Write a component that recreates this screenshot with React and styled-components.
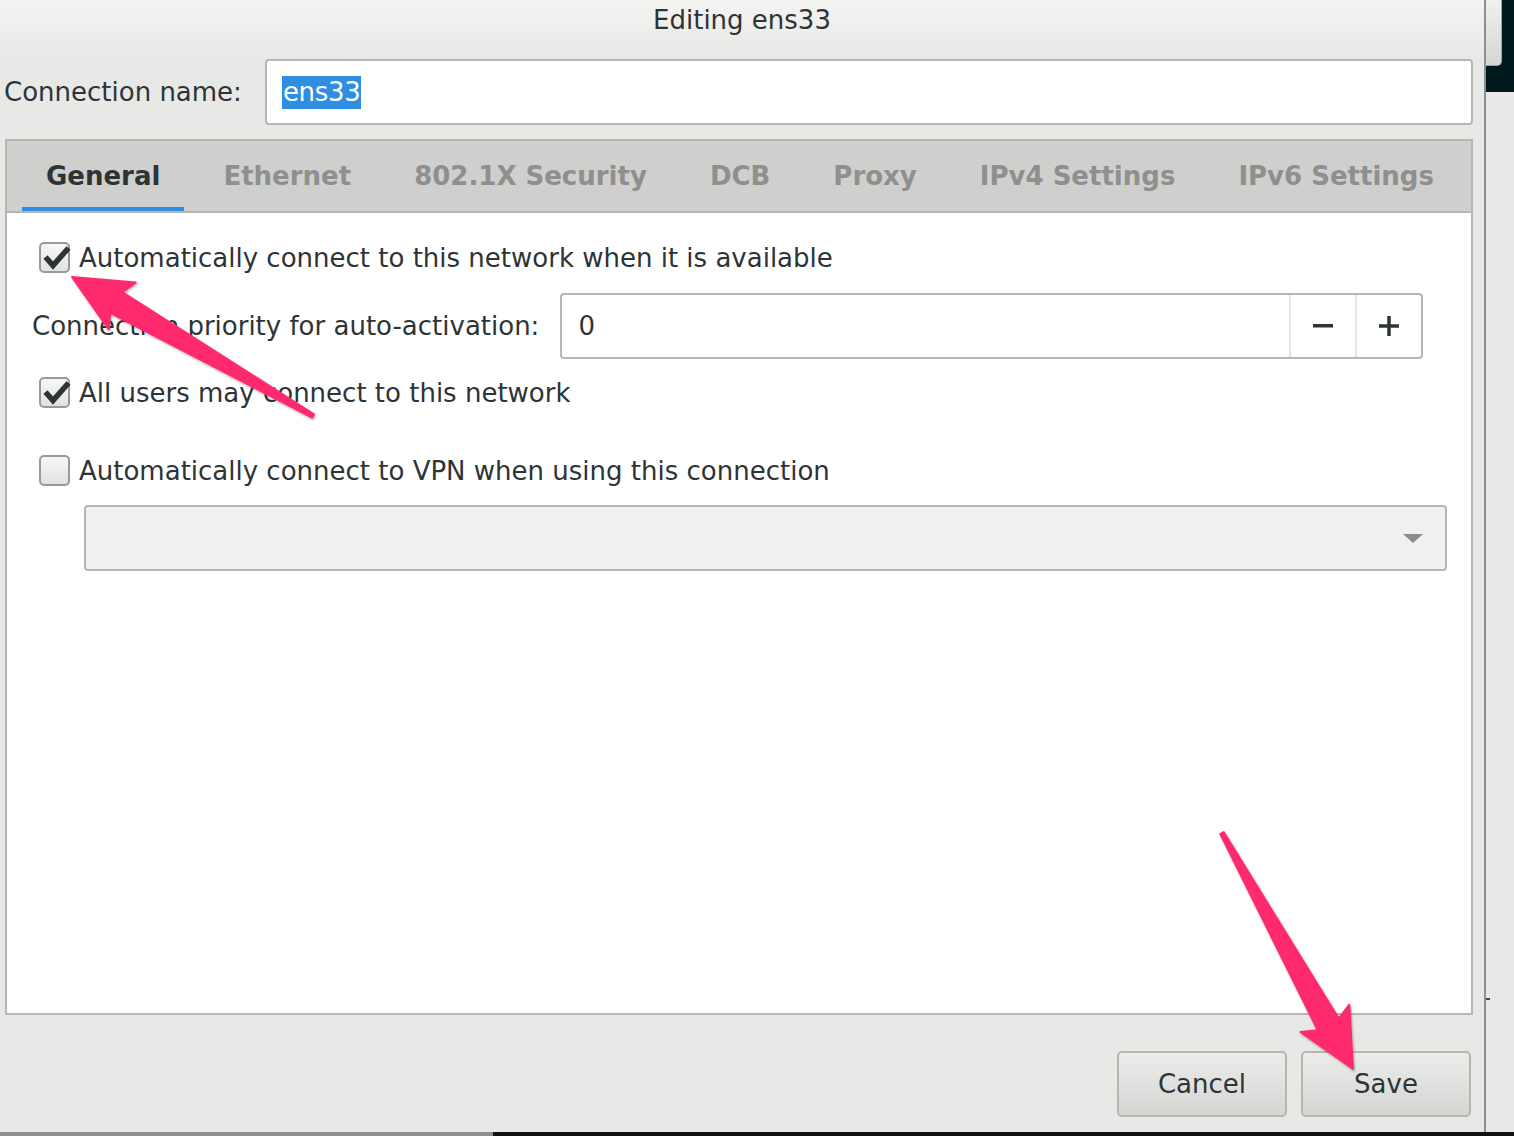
import React from 'react';
import styled, { createGlobalStyle } from 'styled-components';

const GlobalStyle = createGlobalStyle`
  html, body { margin: 0; padding: 0; }
  body {
    background: #e8e8e7;
    font-family: "DejaVu Sans", "Liberation Sans", sans-serif;
    color: #2e3436;
    overflow: hidden;
  }
  * { box-sizing: border-box; }
`;

const Screen = styled.div`
  position: relative;
  width: 1514px;
  height: 1136px;
  display: flex;
  flex-direction: column;
  overflow: hidden;
`;

const Desk = styled.div`
  display: flex;
  height: 1132px;
`;

const Dialog = styled.div`
  width: 1486px;
  border-right: 2px solid #8e8e8e;
  background: linear-gradient(to bottom, #f4f4f3 0, #e8e8e7 58px);
  display: flex;
  flex-direction: column;
`;

const Title = styled.div`
  height: 40px;
  line-height: 40px;
  text-align: center;
  font-size: 26px;
  color: #2e3436;
`;

const NameRow = styled.div`
  display: flex;
  align-items: center;
  gap: 23px;
  margin-top: 19px;
  padding: 0 11px 0 4px;
`;

const Label = styled.span`
  font-size: 26px;
  color: #2e3436;
  white-space: nowrap;
`;

const Entry = styled.div`
  flex: 1;
  height: 66px;
  display: flex;
  align-items: center;
  background: #fff;
  border: 2px solid #b6b6b3;
  border-radius: 4px;
  padding-left: 15px;
  font-size: 26px;
`;

const Selected = styled.span`
  background: #308ee0;
  color: #fff;
  line-height: 33px;
  padding: 0 1px;
  letter-spacing: -0.3px;
`;

const Notebook = styled.div`
  flex: 1;
  margin: 14px 11px 0 5px;
  border: 2px solid #b6b6b3;
  display: flex;
  flex-direction: column;
  background: #fff;
`;

const TabBar = styled.div`
  height: 72px;
  display: flex;
  gap: 15px;
  padding: 0 0 2px 15px;
  background: #cfcfcd;
  border-bottom: 2px solid #b6b6b3;
`;

const Tab = styled.div`
  display: flex;
  align-items: center;
  padding: 0 24px;
  margin-bottom: -2px;
  font-size: 26px;
  font-weight: bold;
  white-space: nowrap;
  color: ${(p) => (p.$active ? '#2e3436' : '#8e908f')};
  box-shadow: ${(p) => (p.$active ? 'inset 0 -4px 0 #308ee0' : 'none')};
`;

const Panel = styled.div`
  flex: 1;
  display: flex;
  flex-direction: column;
  padding-top: 29px;
`;

const CheckRow = styled.label`
  display: flex;
  align-items: center;
  gap: 9px;
  margin-left: 32px;
  margin-top: ${(p) => p.$top || 0}px;
  font-size: 26px;
  color: #2e3436;
`;

const Box = styled.span`
  position: relative;
  width: 31px;
  height: 31px;
  flex: none;
  border: 2px solid #999a97;
  border-radius: 5px;
  background: linear-gradient(to bottom, #f7f7f6, #e2e2e0);

  svg {
    position: absolute;
    left: -2px;
    top: -2px;
    overflow: visible;
  }
`;

const PriorityRow = styled.div`
  display: flex;
  align-items: center;
  gap: 21px;
  margin: 20px 48px 0 25px;
`;

const Spin = styled.div`
  flex: 1;
  height: 66px;
  display: flex;
  background: #fff;
  border: 2px solid #b6b6b3;
  border-radius: 4px;
`;

const SpinValue = styled.div`
  flex: 1;
  display: flex;
  align-items: center;
  padding-left: 16px;
  font-size: 26px;
`;

const SpinButton = styled.div`
  width: 66px;
  display: flex;
  align-items: center;
  justify-content: center;
  border-left: 2px solid #e6e6e5;
`;

const Combo = styled.div`
  height: 66px;
  margin: 19px 24px 0 77px;
  display: flex;
  align-items: center;
  justify-content: flex-end;
  padding-right: 22px;
  background: #f0f0ef;
  border: 2px solid #b6b6b3;
  border-radius: 4px;
`;

const ButtonRow = styled.div`
  height: 117px;
  display: flex;
  justify-content: flex-end;
  gap: 14px;
  padding: 36px 13px 0 0;
`;

const Button = styled.button`
  width: 170px;
  height: 66px;
  font-family: inherit;
  font-size: 26px;
  color: #2e3436;
  background: linear-gradient(to bottom, #ececeb, #d5d5d3);
  border: 2px solid #b6b6b3;
  border-radius: 5px;
`;

const Side = styled.div`
  flex: 1;
  display: flex;
  flex-direction: column;
`;

const SideTop = styled.div`
  height: 92px;
  background: #00191d;
`;

const Nub = styled.div`
  width: 16px;
  height: 66px;
  background: linear-gradient(to bottom, #f0f0ef, #d6d6d4);
  border: 1px solid #a5a5a3;
  border-left: none;
  border-top: none;
  border-radius: 0 0 5px 0;
`;

const Tick = styled.div`
  width: 4px;
  height: 2px;
  margin-top: 906px;
  background: #4a4a4a;
`;

const BottomEdge = styled.div`
  height: 4px;
  display: flex;
`;

const EdgePart = styled.div`
  height: 100%;
  flex: ${(p) => (p.$grow ? 1 : 'none')};
  width: ${(p) => p.$w || 0}px;
  background: ${(p) => p.$c};
`;

const Overlay = styled.svg`
  position: absolute;
  left: 0;
  top: 0;
  pointer-events: none;
`;

const Check = () => (
  <svg width="31" height="31" viewBox="0 0 31 31">
    <path d="M6.5 15 L14 23.5 L29.5 6" fill="none" stroke="#2e3436" strokeWidth="5.5" />
  </svg>
);

const CheckBox = ({ checked, top, children }) => (
  <CheckRow $top={top}>
    <Box>{checked && <Check />}</Box>
    {children}
  </CheckRow>
);

// tapered annotation arrow, tail (tx,ty) -> tip (px,py)
const arrowPoints = (tx, ty, px, py, L, H, w1, w0) => {
  const dx = px - tx;
  const dy = py - ty;
  const len = Math.hypot(dx, dy);
  const ux = dx / len;
  const uy = dy / len;
  const nx = -uy;
  const ny = ux;
  const bx = px - ux * L;
  const by = py - uy * L;
  const kx = px - ux * (L - 7);
  const ky = py - uy * (L - 7);
  return [
    [tx + nx * w0, ty + ny * w0],
    [kx + nx * w1, ky + ny * w1],
    [bx + nx * H, by + ny * H],
    [px, py],
    [bx - nx * H, by - ny * H],
    [kx - nx * w1, ky - ny * w1],
    [tx - nx * w0, ty - ny * w0],
  ]
    .map((p) => p.map((v) => v.toFixed(1)).join(','))
    .join(' ');
};

const tabs = ['General', 'Ethernet', '802.1X Security', 'DCB', 'Proxy', 'IPv4 Settings', 'IPv6 Settings'];

export default function App() {
  return (
    <>
      <GlobalStyle />
      <Screen>
        <Desk>
          <Dialog>
            <Title>Editing ens33</Title>
            <NameRow>
              <Label>Connection name:</Label>
              <Entry>
                <Selected>ens33</Selected>
              </Entry>
            </NameRow>
            <Notebook>
              <TabBar>
                {tabs.map((t, i) => (
                  <Tab key={t} $active={i === 0}>{t}</Tab>
                ))}
              </TabBar>
              <Panel>
                <CheckBox checked>Automatically connect to this network when it is available</CheckBox>
                <PriorityRow>
                  <Label>Connection priority for auto-activation:</Label>
                  <Spin>
                    <SpinValue>0</SpinValue>
                    <SpinButton>
                      <svg width="20" height="4" viewBox="0 0 20 4">
                        <rect width="20" height="3.5" fill="#2e3436" />
                      </svg>
                    </SpinButton>
                    <SpinButton>
                      <svg width="20" height="20" viewBox="0 0 20 20">
                        <rect x="0" y="8.25" width="20" height="3.5" fill="#2e3436" />
                        <rect x="8.25" y="0" width="3.5" height="20" fill="#2e3436" />
                      </svg>
                    </SpinButton>
                  </Spin>
                </PriorityRow>
                <CheckBox checked top={18}>All users may connect to this network</CheckBox>
                <CheckBox top={47}>Automatically connect to VPN when using this connection</CheckBox>
                <Combo>
                  <svg width="20" height="9" viewBox="0 0 20 9">
                    <path d="M0 0 H20 L10 9 Z" fill="#8b8d8a" />
                  </svg>
                </Combo>
              </Panel>
            </Notebook>
            <ButtonRow>
              <Button>Cancel</Button>
              <Button>Save</Button>
            </ButtonRow>
          </Dialog>
          <Side>
            <SideTop>
              <Nub />
            </SideTop>
            <Tick />
          </Side>
        </Desk>
        <BottomEdge>
          <EdgePart $w={493} $c="#8e8e8e" />
          <EdgePart $grow $c="#111" />
        </BottomEdge>
        <Overlay width="1514" height="1136" viewBox="0 0 1514 1136">
          <defs>
            <filter id="shade" x="-10%" y="-10%" width="120%" height="120%">
              <feDropShadow dx="1" dy="1.5" stdDeviation="1.2" floodColor="#000" floodOpacity="0.3" />
            </filter>
          </defs>
          <g fill="#ff2c6d" stroke="#ff2c6d" strokeWidth="2" strokeLinejoin="round" filter="url(#shade)">
            <polygon points={arrowPoints(313, 416, 72, 277, 58, 27, 12, 2)} />
            <polygon points={arrowPoints(1222, 833, 1353, 1069, 58, 28, 12, 2)} />
          </g>
        </Overlay>
      </Screen>
    </>
  );
}
